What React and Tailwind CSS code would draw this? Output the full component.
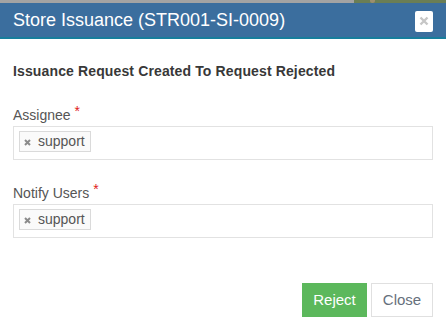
function TagX() {
  return (
    <svg width="7" height="7" viewBox="0 0 7 7" className="mr-[7px] mt-[2px]">
      <path d="M1 1 L6 6 M6 1 L1 6" stroke="#8a8a8a" strokeWidth="2" strokeLinecap="butt" />
    </svg>
  );
}

function Tag() {
  return (
    <div className="inline-flex items-center h-[21px] border border-[#dadada] bg-[#fafafa] pl-[4px] pr-[5px] text-[14px] text-[#555]">
      <TagX />support
    </div>
  );
}

export default function App() {
  const font = { fontFamily: '"Liberation Sans", Arial, sans-serif' };
  return (
    <div className="w-[446px] h-[335px] bg-white overflow-hidden relative" style={font}>
      <div className="flex h-[3px]">
        <div className="w-[354px] bg-[#a3a3a3]" />
        <div className="flex-1 bg-[#6a7e55] relative">
          <div className="absolute left-[16px] top-0 w-[5px] h-[3px] rounded-b-full bg-[#9c8f6e]" />
        </div>
      </div>
      <div className="h-[34px] bg-[#3b6e9e] flex items-center justify-between pl-[13px] pr-[13px]">
        <span className="text-white text-[18px] leading-none">Store Issuance (STR001-SI-0009)</span>
        <div className="w-[18px] h-[21px] bg-white rounded-[2px] flex items-center justify-center mt-[2px]">
          <svg width="10" height="10" viewBox="0 0 10 10">
            <path d="M1.5 1.5 L8.5 8.5 M8.5 1.5 L1.5 8.5" stroke="#c6c6c6" strokeWidth="2.4" />
          </svg>
        </div>
      </div>
      <div className="h-[2px] bg-[#177e9c]" />
      <div className="px-[13px]">
        <div className="mt-[23px] text-[14px] leading-[18px] font-bold text-[#383838] tracking-[0.13px]">
          Issuance Request Created To Request Rejected
        </div>
        <div className="mt-[25px] text-[14px] leading-[20px] text-[#555]">
          Assignee <span className="text-[#e02020] relative top-[-4px]">*</span>
        </div>
        <div className="mt-[1px] h-[34px] border border-[#e2e2e2] pl-[5px] pt-[2px]">
          <Tag />
        </div>
        <div className="mt-[23px] text-[14px] leading-[20px] text-[#555]">
          Notify Users <span className="text-[#e02020] relative top-[-4px]">*</span>
        </div>
        <div className="mt-[1px] h-[34px] border border-[#e2e2e2] pl-[5px] pt-[2px]">
          <Tag />
        </div>
        <div className="mt-[45px] flex justify-end gap-[4px]">
          <button className="w-[65px] h-[34px] bg-[#5cb85c] text-white text-[15px]">Reject</button>
          <button className="w-[62px] h-[34px] bg-white border border-[#e0e0e0] text-[#66707c] text-[15px]">Close</button>
        </div>
      </div>
    </div>
  );
}
